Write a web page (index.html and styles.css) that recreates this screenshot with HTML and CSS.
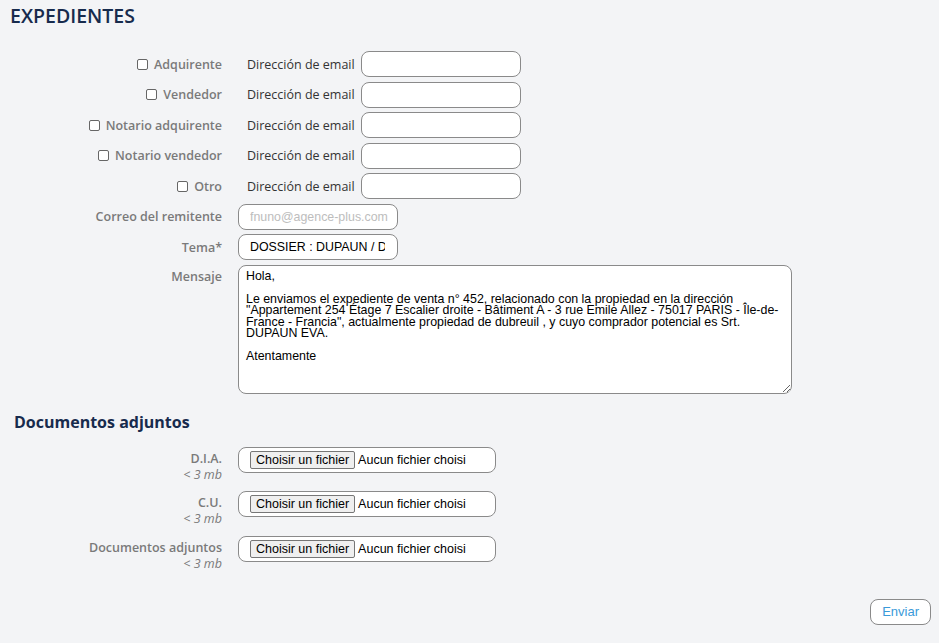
FILE: index.html
```html
<!DOCTYPE html>
<html lang="es">
<head>
<meta charset="utf-8">
<title>Expedientes</title>
<link rel="stylesheet" href="styles.css">
</head>
<body>
<h1 class="title">EXPEDIENTES</h1>
<form class="form">
  <div class="grid">
    <label class="label"><span class="cb"></span>Adquirente</label>
    <div class="field"><span class="sub">Dirección de email</span><input class="inp inp-email" type="text"></div>

    <label class="label"><span class="cb"></span>Vendedor</label>
    <div class="field"><span class="sub">Dirección de email</span><input class="inp inp-email" type="text"></div>

    <label class="label"><span class="cb"></span>Notario adquirente</label>
    <div class="field"><span class="sub">Dirección de email</span><input class="inp inp-email" type="text"></div>

    <label class="label"><span class="cb"></span>Notario vendedor</label>
    <div class="field"><span class="sub">Dirección de email</span><input class="inp inp-email" type="text"></div>

    <label class="label"><span class="cb"></span>Otro</label>
    <div class="field"><span class="sub">Dirección de email</span><input class="inp inp-email" type="text"></div>

    <label class="label">Correo del remitente</label>
    <div class="field"><input class="inp inp-short" type="text" placeholder="fnuno@agence-plus.com"></div>

    <label class="label">Tema*</label>
    <div class="field"><input class="inp inp-short inp-subject" type="text" value="DOSSIER : DUPAUN / DUBREUIL"></div>

    <label class="label label-top">Mensaje</label>
    <div class="field"><textarea class="msg">Hola,

Le enviamos el expediente de venta n° 452, relacionado con la propiedad en la dirección "Appartement 254 Étage 7 Escalier droite - Bâtiment A - 3 rue Emile Allez - 75017 PARIS - Île-de-France - Francia", actualmente propiedad de dubreuil , y cuyo comprador potencial es Srt. DUPAUN EVA.

Atentamente</textarea></div>
  </div>

  <h2 class="section">Documentos adjuntos</h2>

  <div class="grid files">
    <div class="label label-file"><span class="name">D.I.A.</span><span class="size">&lt; 3 mb</span></div>
    <div class="field field-top"><div class="file"><span class="file-btn">Choisir un fichier</span><span class="file-txt">Aucun fichier choisi</span></div></div>

    <div class="label label-file"><span class="name">C.U.</span><span class="size">&lt; 3 mb</span></div>
    <div class="field field-top"><div class="file"><span class="file-btn">Choisir un fichier</span><span class="file-txt">Aucun fichier choisi</span></div></div>

    <div class="label label-file"><span class="name">Documentos adjuntos</span><span class="size">&lt; 3 mb</span></div>
    <div class="field field-top"><div class="file"><span class="file-btn">Choisir un fichier</span><span class="file-txt">Aucun fichier choisi</span></div></div>
  </div>

  <div class="actions"><button class="send" type="button">Enviar</button></div>
</form>
</body>
</html>
```

FILE: styles.css
```css
html, body {
  margin: 0;
  padding: 0;
  background: #f3f4f6;
}
body {
  font-family: "Open Sans", "Liberation Sans", sans-serif;
  color: #333;
  width: 939px;
  height: 643px;
  overflow: hidden;
}
.title {
  margin: 3px 0 0 10px;
  font-size: 19.5px;
  font-weight: 600;
  line-height: 26px;
  color: #172b4d;
  letter-spacing: 0;
}
.form {
  margin-top: 22px;
}
.grid {
  display: grid;
  grid-template-columns: 222px 1fr;
  column-gap: 16px;
  row-gap: 4.5px;
  align-items: center;
}
.label {
  justify-self: end;
  display: flex;
  align-items: center;
  font-size: 12.5px;
  font-weight: 600;
  color: #7a7a7a;
  white-space: nowrap;
}
.label-top {
  align-self: start;
  padding-top: 3px;
}
.cb {
  width: 9px;
  height: 9px;
  border: 1px solid #666;
  border-radius: 2px;
  background: #fff;
  margin-right: 6px;
}
.field {
  display: flex;
  align-items: center;
}
.sub {
  width: 114px;
  margin-left: 9px;
  font-size: 12.5px;
  color: #333;
  white-space: nowrap;
}
.inp {
  box-sizing: border-box;
  height: 26px;
  border: 1px solid #8a8a8a;
  border-radius: 8px;
  background: #fff;
  font-family: "Liberation Sans", Arial, sans-serif;
  font-size: 12.4px;
  color: #000;
  padding: 0 8px 0 11px;
  margin: 0;
  outline: none;
}
.inp::placeholder {
  color: #bdbdbd;
}
.inp-email {
  width: 160px;
}
.inp-short {
  width: 160px;
}
.inp-subject {
  padding-right: 12px;
}
.msg {
  box-sizing: border-box;
  width: 554px;
  height: 129px;
  border: 1px solid #8a8a8a;
  border-radius: 8px;
  background: #fff;
  font-family: "Liberation Sans", Arial, sans-serif;
  font-size: 12.4px;
  line-height: 11.5px;
  color: #000;
  padding: 5px 7px;
  margin: 0;
  resize: both;
  outline: none;
}
.section {
  margin: 17px 0 0 14px;
  font-size: 16px;
  font-weight: 700;
  line-height: 22px;
  color: #172b4d;
}
.files {
  margin-top: 14px;
  row-gap: 8.5px;
  align-items: start;
}
.label-file {
  flex-direction: column;
  align-items: flex-end;
  padding-top: 4px;
}
.name {
  line-height: 16px;
}
.size {
  line-height: 16px;
  font-style: italic;
  font-weight: 400;
  color: #7a7a7a;
}
.file {
  box-sizing: border-box;
  width: 258px;
  height: 26px;
  border: 1px solid #8a8a8a;
  border-radius: 8px;
  background: #fff;
  display: flex;
  align-items: center;
  padding: 0 11px;
  font-family: "Liberation Sans", Arial, sans-serif;
  font-size: 12.5px;
  color: #000;
}
.file-btn {
  box-sizing: border-box;
  height: 18px;
  line-height: 16px;
  padding: 0 5px;
  background: #efefef;
  border: 1px solid #767676;
  border-radius: 2px;
  margin-right: 3px;
  white-space: nowrap;
}
.file-txt {
  white-space: nowrap;
}
.actions {
  display: flex;
  justify-content: flex-end;
  padding: 27px 8px 0 0;
}
.send {
  box-sizing: border-box;
  height: 26px;
  padding: 0 11px;
  border: 1px solid #8a8a8a;
  border-radius: 8px;
  background: #fff;
  font-family: "Liberation Sans", Arial, sans-serif;
  font-size: 13px;
  color: #3a9ad9;
}
```
